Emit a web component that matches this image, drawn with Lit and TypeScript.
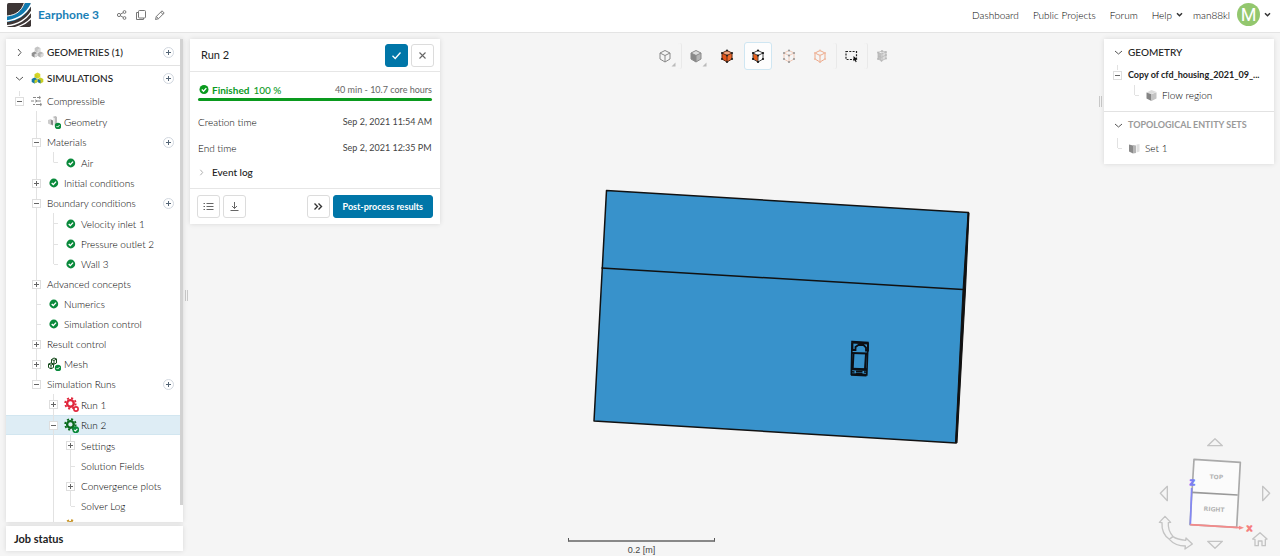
import { LitElement, html, svg, css, nothing, TemplateResult } from "lit";
import { customElement, state } from "lit/decorators.js";
import { classMap } from "lit/directives/class-map.js";

interface TreeNode {
  label: string;
  icon?: string;
  open?: boolean;
  toggle?: boolean;
  add?: boolean;
  selected?: boolean;
  children?: TreeNode[];
}

const TREE: TreeNode[] = [
  {
    label: "Compressible", icon: "flow", open: true, toggle: true,
    children: [
      { label: "Geometry", icon: "geometry" },
      { label: "Materials", open: true, toggle: true, add: true, children: [{ label: "Air", icon: "ok" }] },
      { label: "Initial conditions", icon: "ok", toggle: true },
      {
        label: "Boundary conditions", open: true, toggle: true, add: true,
        children: [
          { label: "Velocity inlet 1", icon: "ok" },
          { label: "Pressure outlet 2", icon: "ok" },
          { label: "Wall 3", icon: "ok" },
        ],
      },
      { label: "Advanced concepts", toggle: true },
      { label: "Numerics", icon: "ok" },
      { label: "Simulation control", icon: "ok" },
      { label: "Result control", toggle: true },
      { label: "Mesh", icon: "mesh", toggle: true },
      {
        label: "Simulation Runs", open: true, toggle: true, add: true,
        children: [
          { label: "Run 1", icon: "gearRed", toggle: true },
          {
            label: "Run 2", icon: "gearGreen", open: true, toggle: true, selected: true,
            children: [
              { label: "Settings", toggle: true },
              { label: "Solution Fields" },
              { label: "Convergence plots", toggle: true },
              { label: "Solver Log" },
            ],
          },
          { label: "", icon: "gearAmber", toggle: true },
        ],
      },
    ],
  },
];

const badgeOk = svg`<circle cx="11" cy="11" r="3.2" fill="#0a8a3c"/><path d="M9.500 11l1.100 1.100 1.900-2" fill="none" stroke="#fff" stroke-width="1"/>`;

const blocks = (a: string, b: string, c: string) => svg`
  <path d="M6.500.6l2.800 1.400v3.200l-2.800 1.400-2.800-1.400V2z" fill="${a}"/>
  <path d="M3.500 5.500l2.800 1.400v3.200l-2.800 1.400L.7 10.100V6.900z" fill="${b}"/>
  <path d="M9.500 5.500l2.800 1.400v3.200l-2.800 1.400-2.800-1.400V6.900z" fill="${c}"/>`;

const gear = (color: string, badge: unknown) => html`<svg width="15" height="15" viewBox="0 0 14 14">
  <circle cx="6" cy="6" r="3.100" fill="none" stroke="${color}" stroke-width="2.200"/>
  <circle cx="6" cy="6" r="4.900" fill="none" stroke="${color}" stroke-width="1.700" stroke-dasharray="1.950 1.900"/>
  ${badge}</svg>`;

const ICONS: Record<string, TemplateResult> = {
  ok: html`<svg width="14" height="14" viewBox="0 0 14 14"><circle cx="6.800" cy="7" r="4.400" fill="#0a8a3c"/><path d="M4.700 7.100l1.600 1.500 2.700-3" fill="none" stroke="#fff" stroke-width="1.400"/></svg>`,
  flow: html`<svg width="14" height="14" viewBox="0 0 14 14" fill="none" stroke="#888" stroke-width="1"><path d="M3 3.500h3M7 3.500h3M1 7h3M5 7h6M3 10.500h2M6 10.500h5"/><path d="M9 2l1.800 1.500L9 5M5.500 5.500L7 7 5.500 8.500M10 9l2 1.500-2 1.500" stroke-width=".8"/></svg>`,
  geometry: html`<svg width="14" height="14" viewBox="0 0 14 14"><path d="M1 5l3-1v6l-3-1.500z" fill="#ccc"/><path d="M4 4.500l2 1v5l-2-1z" fill="#8a8a8a"/><path d="M5.500 2l3-1 1.500 1v7l-2.500 1.500V3z" fill="#bbb"/><path d="M6 3l1.500.8V10L6 9.500z" fill="#eee"/>${badgeOk}</svg>`,
  mesh: html`<svg width="14" height="14" viewBox="0 0 14 14" fill="none" stroke="#164a1c" stroke-width="1"><path d="M4.500 2.500l2.500-1.500 2.500 1V6L7 7.200 4.500 6zM4.500 2.500L7 3.500V7M7 3.500l2.500-1.500M1.500 7L4 6l2.500 1v3.500L4 11.800 1.500 10.500zM1.500 7L4 8.200v3.500M4 8.200L6.500 7"/>${svg`<g stroke="none">${badgeOk}</g>`}</svg>`,
  gearRed: gear("#e0263c", svg`<circle cx="11.200" cy="11.200" r="2" fill="#fff" stroke="#e0263c" stroke-width="1.500"/>`),
  gearGreen: gear("#0b6b1d", badgeOk),
  gearAmber: gear("#c8962a", nothing),
  blocksGrey: html`<svg width="13" height="12" viewBox="0 0 13 12">${blocks("#c4c4c4", "#8f8f8f", "#b4b4b4")}<path d="M3.500 8.300v3.200l2.800-1.400V6.900zM9.500 8.300v3.200l2.800-1.400V6.900zM6.500 3.400v3.200l2.800-1.400V2z" fill="#dadada"/></svg>`,
  blocksColor: html`<svg width="13" height="12" viewBox="0 0 13 12">${blocks("#d6d62a", "#1478a8", "#c9cf22")}<path d="M3.500 8.300v3.200l2.800-1.400V6.900zM6.500 3.400v3.200L3.700 5.200V2z" fill="#c9cf22"/><path d="M9.500 8.300v3.200l-2.800-1.400V6.900z" fill="#1478a8"/></svg>`,
  solid: html`<svg width="13" height="13" viewBox="0 0 13 13"><path d="M1.500 3.500L6.500 1l5 2-5 2z" fill="#ddd"/><path d="M1.500 3.500l5 1.800v6.700l-5-2.500z" fill="#858585"/><path d="M6.500 5.300l5-2v6.200l-5 2.500z" fill="#c4c4c4"/></svg>`,
  faces: html`<svg width="13" height="13" viewBox="0 0 13 13"><path d="M1 2.500l4 1v8l-4-2z" fill="#8a8a8a"/><path d="M5 3l3 .5v7.500l-3 .5z" fill="#b5b5b5"/><path d="M8.500 2.500L11.500 2v7.500l-3 1z" fill="#e0e0e0"/></svg>`,
};

const chevron = (dir: "down" | "right", size = 9) => html`<svg width="${size}" height="${size}" viewBox="0 0 9 9" fill="none" stroke="currentColor" stroke-width="1">
  <path d="${dir === "down" ? "M1 3l3.500 3L8 3" : "M3 1l3 3.500L3 8"}"/></svg>`;

const caret = html`<svg width="7" height="7" viewBox="0 0 7 7" fill="none" stroke="#333" stroke-width="1.500"><path d="M1 2.200l2.500 2.500L6 2.200"/></svg>`;

interface CubeLook { line: string; top?: string; left?: string; right?: string; dots?: string; more?: boolean }

const cube = (c: CubeLook) => html`<svg width="26" height="26" viewBox="0 0 26 26" stroke-linejoin="round">
  <path d="M13 7.500l5 2.500-5 2.500L8 10z" fill="${c.top ?? "none"}"/>
  <path d="M8 10l5 2.500V19l-5-3z" fill="${c.left ?? "none"}"/>
  <path d="M18 10l-5 2.500V19l5-3z" fill="${c.right ?? "none"}"/>
  <path d="M13 7.500l5 2.500v6l-5 3-5-3v-6zM8 10l5 2.500 5-2.500M13 12.500V19" fill="none" stroke="${c.line}" stroke-width="1"/>
  ${c.dots ? svg`<path d="M13 7.500h.01M18 10h.01M18 16h.01M13 19h.01M8 16h.01M8 10h.01M13 12.500h.01" stroke="${c.dots}" stroke-width="2.200" stroke-linecap="round"/>` : nothing}
  ${c.more ? svg`<path d="M23.500 19.500v4h-4z" fill="#bbb"/>` : nothing}
</svg>`;

const TOOLS = [
  { name: "Wireframe", icon: cube({ line: "#888", more: true }), split: true },
  { name: "Shading", icon: cube({ line: "#8a8a8a", top: "#ddd", left: "#888", right: "#b4b4b4", more: true }) },
  { name: "Select volumes", icon: cube({ line: "#5a2a14", top: "#f5a27a", left: "#e2541a", right: "#ee6a2c", dots: "#222" }) },
  { name: "Select faces", icon: cube({ line: "#444", left: "#e8601c", top: "#fff", right: "#fff", dots: "#111" }), active: true },
  { name: "Select edges", icon: cube({ line: "#f0c8b6", dots: "#9a9a9a" }) },
  { name: "Select vertices", icon: cube({ line: "#eda98a", dots: "#f0bda6" }), split: true },
  { name: "Box selection", icon: html`<svg width="26" height="26" viewBox="0 0 26 26"><path d="M8 8.500h10.500v8H8z" fill="none" stroke="#222" stroke-width="1.200" stroke-dasharray="2 1.300"/><path d="M15.500 13l4 3.500-1.700.3.900 2-1 .5-.9-2-1.300 1z" fill="#111"/></svg>`, split: true },
  { name: "Selection sets", icon: html`<svg width="26" height="26" viewBox="0 0 26 26"><path d="M9 9.500l3.500 1.300v7L9 16z" fill="#c0c0c0"/><path d="M12.500 10.800L17 9v6.500l-4.500 2.300z" fill="#dcdcdc"/><path d="M9 9.500l4-1.500 4 1M9 9.500l3.500 1.300L17 9v6.500l-4.500 2.300L9 16zM13 8v9.500M9 13l3.500 1.300L17 12" fill="none" stroke="#b8b8b8" stroke-width=".8"/><path d="M9 9.500h.01M13 8h.01M17 9h.01M17 12h.01M17 15.500h.01M12.500 17.800h.01M9 16h.01" stroke="#b8b8b8" stroke-width="1.800" stroke-linecap="round"/></svg>` },
];

@customElement("app-root")
export class AppRoot extends LitElement {
  @state() private nodes = TREE;

  static styles = css`
    :host { display: flex; flex-direction: column; height: 100vh; overflow: hidden; background: #f5f5f5;
      font-family: Lato, sans-serif; font-size: 10px; line-height: 14px; color: #222; }
    * { box-sizing: border-box; }
    button { font: inherit; color: inherit; background: none; border: 0; padding: 0; margin: 0; display: inline-flex; align-items: center; justify-content: center; cursor: pointer; }
    a { color: inherit; text-decoration: none; }
    svg { display: block; flex: none; }
    h1, dl, dd { margin: 0; padding: 0; font-size: inherit; font-weight: inherit; }

    .top { display: flex; align-items: center; height: 33px; flex: none; padding: 0 9px 3px 7px; background: #fff; border-bottom: 1px solid #e4e4e4; z-index: 1; }
    .project { margin-left: 7px; font-size: 12px; font-weight: 700; color: #1a80b6; }
    .actions { display: flex; gap: 7px; margin-left: 17px; color: #777; }
    .nav { display: flex; align-items: center; margin-left: auto; gap: 14px; font-weight: 300; color: #000; }
    .menu { gap: 4px; }
    .user { gap: 7px; margin-left: -4px; }
    .user svg { margin-left: -3px; }
    .avatar { display: flex; align-items: center; justify-content: center; width: 23px; height: 23px; border-radius: 50%; background: #93c76e; color: #fff; font-family: Roboto, sans-serif; font-size: 18px; font-weight: 400; }

    .work { position: relative; flex: 1; min-height: 0; display: flex; align-items: flex-start; padding: 6px 6px 5px; }
    .viewport { position: absolute; inset: 0; width: 100%; height: 100%; }
    .card { position: relative; background: #fff; box-shadow: 0 0 5px rgba(0, 0, 0, .12); }
    .side { display: flex; flex-direction: column; align-self: stretch; gap: 4px; width: 177px; flex: none; }
    .treecard { display: flex; flex: 1; min-height: 0; overflow: hidden; }
    .tree { flex: 1; min-width: 0; }
    .scroll { width: 3px; flex: none; margin-bottom: 17px; background: #d2d2d2; }
    .job { justify-content: flex-start; height: 25px; flex: none; padding-left: 8px; font-size: 11px; font-weight: 700; }

    .section { display: flex; align-items: center; height: 26px; padding: 0 6px 0 8px; white-space: nowrap; }
    .section.ruled { height: 27px; margin-bottom: -1px; border-bottom: 1px solid #e2e2e2; }
    .section .name { margin-left: 3px; font-weight: 500; flex: 1; }
    .fold { width: 10px; margin-right: 7px; color: #555; }
    .add { width: 11px; height: 11px; border: 1px solid #d2d8e0; border-radius: 50%; flex: none; }
    .row { display: flex; align-items: center; height: 20px; padding: 0 6px 0 5px; white-space: nowrap; font-weight: 300; color: #000; }
    .row.first { height: 21px; }
    .row.selected { background: #deedf5; box-shadow: inset 0 1px #d2e6f0, inset 0 -1px #d2e6f0; }
    .row .name { flex: 1; }
    .guide { display: flex; align-items: center; justify-content: center; align-self: stretch; width: 17px; flex: none; background: no-repeat 8px 0 / 1px 100%; }
    .guide.line { background-image: linear-gradient(#e2e2e2, #e2e2e2); }
    .guide.end { background-size: 1px 50%; }
    .guide.stub { background-size: 1px 5px; background-image: linear-gradient(#e2e2e2, #e2e2e2); }
    .tick { width: 4px; height: 1px; margin-left: 5px; background: #e2e2e2; }
    .box { width: 9px; height: 9px; border: 1px solid #dedede; background: #fff; }
    .lead { width: 2px; flex: none; }
    .slot { width: 17px; flex: none; }

    .grip { display: flex; justify-content: center; gap: 1px; width: 7px; flex: none; align-self: center; }
    .grip i { width: 1px; height: 11px; background: #c9c9c9; }
    .run { width: 250px; flex: none; }
    .runhead { display: flex; align-items: center; gap: 3px; height: 33px; padding: 0 6px 0 11px; border-bottom: 1px solid #e6e6e6; }
    .runhead h1 { flex: 1; font-size: 11px; }
    .btn { min-width: 23px; height: 23px; border: 1px solid #dcdcdc; border-radius: 3px; background: #fff; color: #666; }
    .btn.primary { background: #0076a8; border-color: #0076a8; color: #fff; }
    .btn.wide { padding: 0 9px; font-size: 9px; font-weight: 700; }
    .runbody { padding: 11px 8px 9px; }
    .status { display: flex; align-items: center; }
    .done { display: flex; align-items: center; color: #0a9a1e; font-weight: 500; gap: 2px; flex: 1; }
    .done b { margin-right: 2px; font-weight: 700; }
    .muted { color: #666; font-size: 9px; }
    .bar { height: 3px; margin-top: 1px; border-radius: 2px; background: #e4e4e4; }
    .fill { height: 100%; border-radius: 2px; background: #0a9a1e; }
    .facts { display: grid; grid-template-columns: 1fr auto; row-gap: 12px; padding-top: 14px; }
    .facts dt { font-weight: 300; color: #000; }
    .facts dd { font-size: 9px; color: #444; }
    .log { margin-top: 10px; gap: 7px; font-weight: 500; }
    .log svg { color: #999; }
    .runfoot { display: flex; align-items: center; gap: 3px; height: 36px; padding: 0 7px; border-top: 1px solid #e6e6e6; }
    .push { margin-left: auto; }

    .stage { flex: 1; min-width: 0; display: flex; justify-content: center; padding: 3px 0 0 9px; }
    .tools { position: relative; display: flex; gap: 3px; }
    .tool { width: 28px; height: 28px; border: 1px solid transparent; border-radius: 3px; }
    .tool.active { background: #fdfdfd; border-color: #cfe6f2; }
    .tool.split { box-shadow: 3px 0 0 -1px #f5f5f5, 4px 0 0 -1px #e9e9e9; }

    .right { display: flex; align-items: flex-start; flex: none; }
    .geo { width: 170px; flex: none; padding-bottom: 6px; }
    .geo .section { padding: 0 8px 0 9px; }
    .geo .fold { margin-right: 2px; }
    .geo .bold { font-size: 9px; font-weight: 700; color: #222; }
    .geo .faint { font-size: 9px; font-weight: 700; color: #9a9a9a; }
    .part { border-bottom: 1px solid #e2e2e2; padding-bottom: 6px; }

    .scale { position: absolute; left: 50%; bottom: 0; width: 147px; margin-left: -72px; font-family: "Liberation Sans", sans-serif; font-size: 9px; line-height: 12px; text-align: center; color: #444; }
    .rule { height: 4px; border: 1px solid #555; border-top: 0; border-bottom: 2px solid #888; margin-bottom: 2px; }
    .navcube { position: absolute; right: 0; bottom: 0; }
    .axis { font: 24px "Liberation Sans", sans-serif; }
    .face { font: bold 18px "DejaVu Sans", sans-serif; fill: #b4b4b4; }
  `;

  private rows(nodes: TreeNode[], trail: boolean[] = []): TemplateResult[] {
    return nodes.flatMap((n, i) => {
      const last = i === nodes.length - 1;
      const depth = trail.length;
      const own = depth === 0 ? { guide: true, stub: true } : { guide: true, line: true, end: last && n.label !== "" };
      const row = html`<div role="treeitem" class=${classMap({ row: true, first: depth > 0 && i === 0, selected: !!n.selected })}>
        ${trail.map((on) => html`<span class=${classMap({ guide: true, line: on })}></span>`)}
        <span class=${classMap(own)}>${n.toggle ? this.box(!!n.open) : html`<span class="tick"></span>`}</span>
        <span class="lead"></span>
        ${n.icon ? html`<span class="slot">${ICONS[n.icon]}</span>` : nothing}
        <span class="name">${n.label}</span>
        ${n.add ? this.add(n.label) : nothing}
      </div>`;
      return [row, ...(n.children ? this.rows(n.children, [...trail, depth > 0 && !last]) : [])];
    });
  }

  private box(open: boolean) {
    return html`<button class="box" aria-label=${open ? "Collapse" : "Expand"}><svg width="7" height="7" viewBox="0 0 7 7" stroke="#666" stroke-width="1" shape-rendering="crispEdges"><path d=${open ? "M1 3.500h5" : "M1 3.500h5M3.500 1v5"}/></svg></button>`;
  }

  private add(what: string) {
    return html`<button class="add" aria-label="Add to ${what}"><svg width="7" height="7" viewBox="0 0 7 7" stroke="#567" stroke-width="1" shape-rendering="crispEdges"><path d="M1 3.500h5M3.500 1v5"/></svg></button>`;
  }

  private scene() {
    return html`<svg class="viewport" viewBox="0 0 1280 523" aria-label="Model view">
      <path d="M606.500 157.500L968.500 179.500 956 410 594 388z" fill="#3892cb" stroke="#111" stroke-width="1.500" stroke-linejoin="round"/>
      <path d="M601.500 235L963 256.500" stroke="#111" stroke-width="1.500"/>
      <path d="M968 180L963 257 955.500 409.500 957 410 965.500 257 969 180z" fill="#111" stroke="#111" stroke-width="1"/>
      <g fill="none" stroke="#0b0f14">
        <path d="M852 308.500l16 1-1.200 32.500-15.500-.8z" stroke-width="1.600"/>
        <path d="M852.500 309.500l15 .8" stroke-width="2.200"/>
        <path d="M852.500 310v7h3v-3l3-2h5l2.500 2.500v3h2V310" stroke-width="1.800"/>
        <path d="M852 320l15.500.6" stroke-width="2"/>
        <path d="M853.500 320l-.8 15.500M866 321l-1 15" stroke-width="2"/>
        <path d="M851.500 336l15.500.6M851 341.500l15.500.6" stroke-width="2.600"/>
        <path d="M851.500 338.700l3 .2M856 338.200l6.500.4M856 340.200l6.500.3M864 339l3 .2" stroke-width="1.500"/>
      </g>
    </svg>`;
  }

  private navCube() {
    return html`<svg class="navcube" width="140" height="126" viewBox="0 0 420 378" fill="none" stroke="#c4c4c4" stroke-width="4" stroke-linejoin="round" aria-label="View orientation">
      <path d="M225 26l22 21h-44zM225 355l22-21h-44zM61 190l21-21v43zM389 190l-21-21v43z"/>
      <path d="M162 88l139 9-11 195-140-8z" fill="#fbfbfb" stroke="#aaa" stroke-width="5"/>
      <path d="M156 187l137 8" stroke="#999" stroke-width="5"/>
      <path d="M75 259l-17 18 8 1q-2 32 22 50l11-9q-16-17-14-41l7-1zM99 320q13 9 38 11l1-7 19 18-22 15 1-9q-30 0-48-20z" stroke-width="4"/>
      <path d="M338 327l22-19 21 19-5 1v19h-10v-14h-11v14h-10v-19z" stroke-width="4"/>
      <path d="M151 284l4-110" stroke="#8488f5" stroke-width="5"/>
      <path d="M151 284l146 9" stroke="#f58a8a" stroke-width="5"/>
      <path d="M297 287l15 6-15 6z" fill="#f58a8a" stroke="none"/>
      <g stroke="none">
        <text class="face" x="229" y="147" text-anchor="middle" transform="rotate(2 229 146)">TOP</text>
        <text class="face" x="222" y="244" text-anchor="middle" transform="rotate(3 222 244)">RIGHT</text>
        <text class="axis" x="149" y="164" fill="#7a7ef5" stroke="#7a7ef5">Z</text>
        <text class="axis" x="320" y="302" fill="#f57f7f" stroke="#f57f7f">X</text>
      </g>
    </svg>`;
  }

  render() {
    return html`
      <header class="top">
        <svg width="24" height="24" viewBox="0 0 72 72" role="img" aria-label="Home">
          <clipPath id="tile"><rect width="72" height="72" rx="5"/></clipPath>
          <g clip-path="url(#tile)">
            <rect width="72" height="72" fill="#3d3636"/>
            <path d="M0 40C28 36 44 24 54 0H76C62 36 34 54 0 57z" fill="#0f7ab0"/>
            <path d="M0 39C28 36 43 24 52 0" fill="none" stroke="#fff" stroke-width="3"/>
            <path d="M0 54C34 50 58 34 74 2" fill="none" stroke="#fff" stroke-width="5"/>
            <path d="M0 68C32 66 60 48 74 24" fill="none" stroke="#fff" stroke-width="4"/>
            <path d="M24 74C44 68 62 58 74 44" fill="none" stroke="#fff" stroke-width="4"/>
          </g>
        </svg>
        <h1 class="project">Earphone 3</h1>
        <div class="actions">
          <button aria-label="Share"><svg width="12" height="12" viewBox="0 0 12 12" fill="none" stroke="currentColor"><circle cx="3" cy="6" r="1.600"/><circle cx="8.500" cy="3" r="1.400"/><circle cx="8.500" cy="9" r="1.400"/><path d="M4.400 5.200l2.800-1.500M4.400 6.800l2.800 1.500"/></svg></button>
          <button aria-label="Copy"><svg width="12" height="12" viewBox="0 0 12 12" fill="none" stroke="currentColor"><rect x="3.500" y="1.500" width="7" height="7.500" rx="1"/><path d="M3.500 3.500h-2v7h7V9"/></svg></button>
          <button aria-label="Rename"><svg width="12" height="12" viewBox="0 0 12 12" fill="none" stroke="currentColor"><path d="M1.500 10.500l.8-3L8 1.800l2.200 2.200-5.700 5.700zM6.700 3.100l2.200 2.200M2.300 7.500l2.200 2.200"/></svg></button>
        </div>
        <nav class="nav">
          <a href="#">Dashboard</a><a href="#">Public Projects</a><a href="#">Forum</a>
          <button class="menu">Help ${caret}</button>
          <button class="user">man88kl <span class="avatar">M</span>${caret}</button>
        </nav>
      </header>
      <main class="work">
        ${this.scene()}
        <div class="scale"><div class="rule"></div>0.2 [m]</div>
        ${this.navCube()}
        <aside class="side">
          <div class="card treecard">
            <div class="tree" role="tree">
              <div class="section ruled"><button class="fold" aria-label="Expand">${chevron("right")}</button>${ICONS.blocksGrey}<span class="name">GEOMETRIES (1)</span>${this.add("geometries")}</div>
              <div class="section"><button class="fold" aria-label="Collapse">${chevron("down")}</button>${ICONS.blocksColor}<span class="name">SIMULATIONS</span>${this.add("simulations")}</div>
              ${this.rows(this.nodes)}
            </div>
            <div class="scroll"></div>
          </div>
          <button class="card job">Job status</button>
        </aside>
        <div class="grip"><i></i><i></i></div>
        <section class="card run">
          <div class="runhead">
            <h1>Run 2</h1>
            <button class="btn primary" aria-label="Apply"><svg width="11" height="11" viewBox="0 0 11 11" fill="none" stroke="currentColor" stroke-width="1.300"><path d="M1.500 5.800l2.700 2.700L9.500 2.500"/></svg></button>
            <button class="btn" aria-label="Close"><svg width="9" height="9" viewBox="0 0 9 9" stroke="currentColor" stroke-width="1.100"><path d="M1.500 1.500l6 6M7.500 1.500l-6 6"/></svg></button>
          </div>
          <div class="runbody">
            <div class="status">
              <span class="done"><svg width="12" height="12" viewBox="0 0 12 12"><circle cx="6" cy="5.500" r="4.500" fill="#0a9a1e"/><path d="M3.800 5.600l1.700 1.600 2.800-3.100" fill="none" stroke="#fff" stroke-width="1.400"/></svg><b>Finished</b>100 %</span>
              <span class="muted">40 min - 10.7 core hours</span>
            </div>
            <div class="bar"><div class="fill"></div></div>
            <dl class="facts">
              <dt>Creation time</dt><dd>Sep 2, 2021 11:54 AM</dd>
              <dt>End time</dt><dd>Sep 2, 2021 12:35 PM</dd>
            </dl>
            <button class="log">${chevron("right", 7)}Event log</button>
          </div>
          <div class="runfoot">
            <button class="btn" aria-label="Details"><svg width="11" height="11" viewBox="0 0 11 11" stroke="currentColor" stroke-width="1"><path d="M.5 2.500H2M3.500 2.500h7M.5 5.500H2M3.500 5.500h7M.5 8.500H2M3.500 8.500h7"/></svg></button>
            <button class="btn" aria-label="Download"><svg width="11" height="11" viewBox="0 0 11 11" fill="none" stroke="currentColor" stroke-width="1"><path d="M5.500 1v6.500M3 5l2.500 2.500L8 5M1.500 9.500h8"/></svg></button>
            <button class="btn push" aria-label="More"><svg width="10" height="9" viewBox="0 0 10 9" fill="none" stroke="#333" stroke-width="1.400"><path d="M1.500 1.500l3 3-3 3M5.500 1.500l3 3-3 3"/></svg></button>
            <button class="btn primary wide">Post-process results</button>
          </div>
        </section>
        <div class="stage">
          <div class="tools" role="toolbar">
            ${TOOLS.map((t) => html`<button class=${classMap({ tool: true, active: !!t.active, split: !!t.split })} aria-label=${t.name}>${t.icon}</button>`)}
          </div>
        </div>
        <div class="right">
          <div class="grip"><i></i><i></i></div>
          <aside class="card geo">
            <div class="part">
              <div class="section"><button class="fold" aria-label="Collapse">${chevron("down")}</button><span class="name">GEOMETRY</span></div>
              <div class="row"><span class="guide stub">${this.box(true)}</span><span class="lead"></span><span class="name bold">Copy of cfd_housing_2021_09_...</span></div>
              <div class="row"><span class="guide"></span><span class="guide line end"><span class="tick"></span></span><span class="lead"></span><span class="slot">${ICONS.solid}</span><span class="name">Flow region</span></div>
            </div>
            <div class="section"><button class="fold" aria-label="Collapse">${chevron("down")}</button><span class="name faint">TOPOLOGICAL ENTITY SETS</span></div>
            <div class="row"><span class="guide line end"><span class="tick"></span></span><span class="lead"></span><span class="slot">${ICONS.faces}</span><span class="name">Set 1</span></div>
          </aside>
        </div>
      </main>`;
  }
}
